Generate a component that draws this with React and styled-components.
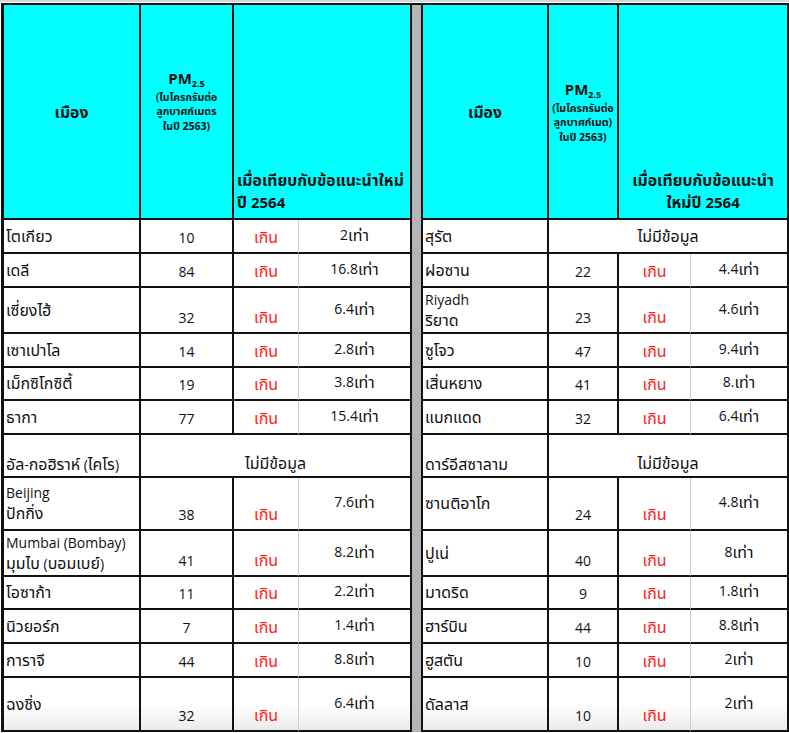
import React from "react";
import styled, { createGlobalStyle } from "styled-components";

const GlobalStyle = createGlobalStyle`
  html, body {
    margin: 0;
    padding: 0;
    background: #fff;
  }
  body {
    font-family: "Open Sans", "Noto Sans Thai", "Noto Sans", "DejaVu Sans", sans-serif;
    color: #111;
  }
`;

const FONT = `"Open Sans", "Noto Sans Thai", "Noto Sans", "DejaVu Sans", sans-serif`;

// height of each row, bottom border included
const rowHeights = [215, 34, 34, 46, 34, 33, 34, 43, 53, 46, 33, 34, 34, 54];

const Page = styled.div`
  border-top: 2px solid #d6d6d6;
  padding-top: 1px;
  width: 789px;
  height: 733px;
  box-sizing: border-box;
  overflow: hidden;
`;

const Sheet = styled.div`
  display: grid;
  grid-template-columns: 137px 93px 65px 113px 11px 126px 70px 72px 98px;
  grid-template-rows: ${rowHeights.map(h => `${h}px`).join(" ")};
  margin-left: 1px;
  border-top: 2px solid #111;
  border-left: 3px solid #111;
  width: max-content;
  font-family: ${FONT};
`;

const Cell = styled.div`
  box-sizing: border-box;
  border-right: 2px solid #111;
  border-bottom: 2px solid #111;
  display: flex;
  align-items: ${p => (p.$v === "bottom" ? "flex-end" : p.$v === "top" ? "flex-start" : "center")};
  justify-content: ${p => (p.$align === "left" ? "flex-start" : "center")};
  text-align: ${p => (p.$align === "left" ? "left" : "center")};
  grid-column: ${p => (p.$span ? `span ${p.$span}` : "auto")};
  background: ${p => (p.$fade ? "linear-gradient(#fff 50%, #ebebeb)" : "#fff")};
  font-size: 14px;
  line-height: 20px;
  white-space: nowrap;
`;

// Thai runs are drawn a size up so they sit like the sheet's Thai face
const Th = styled.span`
  font-size: ${p => p.$scale || 1.14}em;
  line-height: inherit;
`;

const HeadCell = styled(Cell)`
  background: #00ffff;
  font-weight: 700;
  font-size: 15px;
  line-height: 22px;
  padding: ${p => p.$pad || "0"};
`;

const PmTitle = styled.div`
  font-size: 15px;
  line-height: 20px;
  margin-bottom: 2px;
  sub {
    font-size: 9px;
    vertical-align: -3px;
    line-height: 0;
  }
`;

const PmNote = styled.div`
  font-size: 10.5px;
  line-height: 14.5px;
`;

const CityCell = styled(Cell)`
  padding: ${p => (p.$v === "bottom" ? "0 0 1px 2px" : "0 0 0 2px")};
`;

const NumCell = styled(Cell)`
  padding-bottom: 4px;
`;

const OverCell = styled(Cell)`
  color: #ff1a1a;
  border-right: 1px solid #cfcfcf;
  padding-bottom: 5px;
`;

const RatioCell = styled(Cell)`
  padding-bottom: 3px;
`;

const NoDataCell = styled(Cell)`
  padding-bottom: ${p => (p.$v === "bottom" ? "3px" : "0")};
`;

const Divider = styled.div`
  grid-column: 5;
  grid-row: 1 / -1;
  background: #b4b4b4;
  border-right: 2px solid #111;
  border-left: 2px solid #111;
  margin-left: -2px;
  box-sizing: border-box;
`;

const Text = ({ children, scale }) =>
  String(children)
    .split(/([\u0E00-\u0E7F]+)/)
    .map((part, i) =>
      /[\u0E00-\u0E7F]/.test(part) ? (
        <Th key={i} $scale={scale}>
          {part}
        </Th>
      ) : (
        part
      )
    );

const leftRows = [
  { city: ["โตเกียว"], pm: 10, ratio: "2เท่า" },
  { city: ["เดลี"], pm: 84, ratio: "16.8เท่า" },
  { city: ["เซี่ยงไฮ้"], pm: 32, ratio: "6.4เท่า" },
  { city: ["เซาเปาโล"], pm: 14, ratio: "2.8เท่า" },
  { city: ["เม็กซิโกซิตี้"], pm: 19, ratio: "3.8เท่า" },
  { city: ["ธากา"], pm: 77, ratio: "15.4เท่า" },
  { city: ["อัล-กอฮิราห์ (ไคโร)"], none: true },
  { city: ["Beijing", "ปักกิ่ง"], pm: 38, ratio: "7.6เท่า" },
  { city: ["Mumbai (Bombay)", "มุมไบ (บอมเบย์)"], pm: 41, ratio: "8.2เท่า" },
  { city: ["โอซาก้า"], pm: 11, ratio: "2.2เท่า" },
  { city: ["นิวยอร์ก"], pm: 7, ratio: "1.4เท่า" },
  { city: ["การาจี"], pm: 44, ratio: "8.8เท่า" },
  { city: ["ฉงชิ่ง"], pm: 32, ratio: "6.4เท่า" },
];

const rightRows = [
  { city: ["สุรัต"], none: true, middle: true },
  { city: ["ฝอซาน"], pm: 22, ratio: "4.4เท่า" },
  { city: ["Riyadh", "ริยาด"], pm: 23, ratio: "4.6เท่า" },
  { city: ["ซูโจว"], pm: 47, ratio: "9.4เท่า" },
  { city: ["เสิ่นหยาง"], pm: 41, ratio: "8.เท่า" },
  { city: ["แบกแดด"], pm: 32, ratio: "6.4เท่า" },
  { city: ["ดาร์อีสซาลาม"], none: true },
  { city: ["ซานติอาโก"], pm: 24, ratio: "4.8เท่า" },
  { city: ["ปูเน่"], pm: 40, ratio: "8เท่า" },
  { city: ["มาดริด"], pm: 9, ratio: "1.8เท่า" },
  { city: ["ฮาร์บิน"], pm: 44, ratio: "8.8เท่า" },
  { city: ["ฮูสตัน"], pm: 10, ratio: "2เท่า" },
  { city: ["ดัลลาส"], pm: 10, ratio: "2เท่า" },
];

const Half = ({ row, fade }) => {
  const { city, pm, ratio, none, middle } = row;
  const v = none && !middle ? "bottom" : "middle";
  return (
    <>
      <CityCell $align="left" $v={v} $fade={fade}>
        <div>
          {city.map(line => (
            <div key={line}>
              <Text>{line}</Text>
            </div>
          ))}
        </div>
      </CityCell>
      {none ? (
        <NoDataCell $span={3} $v={v} $fade={fade}>
          <Text>ไม่มีข้อมูล</Text>
        </NoDataCell>
      ) : (
        <>
          <NumCell $v="bottom" $fade={fade}>
            {pm}
          </NumCell>
          <OverCell $v="bottom" $fade={fade}>
            <Text>เกิน</Text>
          </OverCell>
          <RatioCell $fade={fade}>
            <Text>{ratio}</Text>
          </RatioCell>
        </>
      )}
    </>
  );
};

const PmHead = ({ unit, pad }) => (
  <HeadCell $pad={pad}>
    <div>
      <PmTitle>
        PM<sub>2.5</sub>
      </PmTitle>
      <PmNote>(ไมโครกรัมต่อ</PmNote>
      <PmNote>{unit}</PmNote>
      <PmNote>ในปี 2563)</PmNote>
    </div>
  </HeadCell>
);

const App = () => {
  return (
    <Page>
      <GlobalStyle />
      <Sheet>
        <Divider />
        <HeadCell>
          <Text scale={1.05}>เมือง</Text>
        </HeadCell>
        <PmHead unit="ลูกบาศก์เมตร" pad="0 0 22px 0" />
        <HeadCell $span={2} $align="left" $v="bottom" $pad="0 0 5px 3px">
          <div>
            <Text scale={1.05}>เมื่อเทียบกับข้อแนะนำใหม่</Text>
            <br />
            <Text scale={1.05}>ปี 2564</Text>
          </div>
        </HeadCell>
        <HeadCell>
          <Text scale={1.05}>เมือง</Text>
        </HeadCell>
        <PmHead unit="ลูกบาศก์เมต)" pad="0" />
        <HeadCell $span={2} $v="bottom" $pad="0 0 5px 0">
          <div>
            <Text scale={1.05}>เมื่อเทียบกับข้อแนะนำ</Text>
            <br />
            <Text scale={1.05}>ใหม่ปี 2564</Text>
          </div>
        </HeadCell>
        {leftRows.map((row, i) => {
          const fade = i === leftRows.length - 1;
          return (
            <React.Fragment key={i}>
              <Half row={row} fade={fade} />
              <Half row={rightRows[i]} fade={fade} />
            </React.Fragment>
          );
        })}
      </Sheet>
    </Page>
  );
};

export default App;
